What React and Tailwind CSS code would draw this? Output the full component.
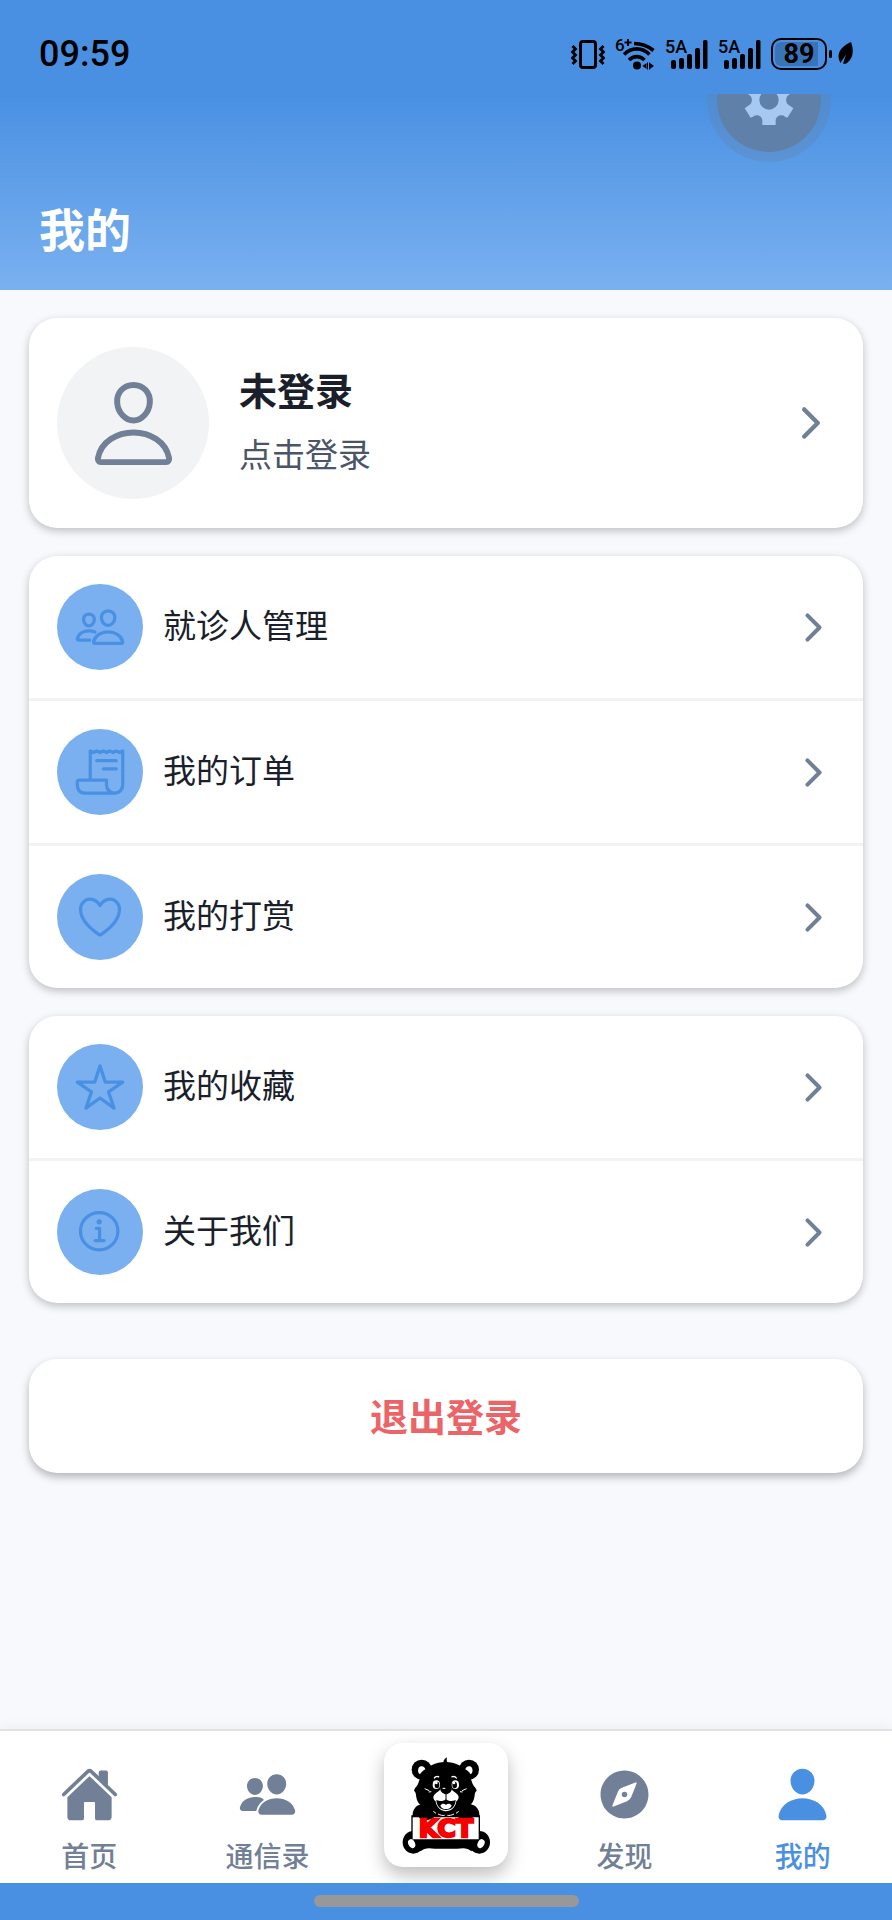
import React, { useState } from 'react';
import {
  IoChevronForward,
  IoCompass,
  IoHeartOutline,
  IoHome,
  IoInformationCircleOutline,
  IoPeople,
  IoPeopleOutline,
  IoPerson,
  IoPersonOutline,
  IoReceiptOutline,
  IoStarOutline,
} from 'react-icons/io5';

const serviceItems = [
  { id: 'patients', label: '就诊人管理', icon: IoPeopleOutline },
  { id: 'orders', label: '我的订单', icon: IoReceiptOutline },
  { id: 'rewards', label: '我的打赏', icon: IoHeartOutline },
];

const otherItems = [
  { id: 'favorites', label: '我的收藏', icon: IoStarOutline },
  { id: 'about', label: '关于我们', icon: IoInformationCircleOutline },
];

// --- STATUS BAR ---
const VibrateIcon = () => (
  <svg width="34" height="29" viewBox="0 0 34 29" fill="none" stroke="#000" aria-hidden="true">
    <rect x="9.5" y="1.5" width="15" height="26" rx="2.5" strokeWidth="3" />
    <path d="M1.5 6l3 3-3 3 3 3-3 3 3 3-3 3" strokeWidth="2.8" />
    <path d="M32.5 6l-3 3 3 3-3 3 3 3-3 3 3 3" strokeWidth="2.8" />
  </svg>
);

const WifiIcon = () => (
  <svg width="40" height="41" viewBox="0 -5 40 41" fill="none" stroke="#000" strokeWidth="3.6" aria-hidden="true">
    <path d="M19 4.5c8 0 14 2.5 19.5 7" />
    <path d="M9 15.5c7.5-7.5 18-7.5 25.5 0" />
    <path d="M14 21c4.5-4.5 11-4.5 15.5 0" />
    <circle cx="22" cy="26.5" r="4" fill="#000" stroke="none" />
    <path d="M27.5 27l4-3v6zM39 27l-4-3v6z" fill="#000" stroke="none" />
    <path d="M32.5 23.5v7M34.5 23.5v7" strokeWidth="1" />
    <text x="0" y="12" fill="#000" stroke="none" className="font-['Roboto',sans-serif] text-[17px] font-medium">6</text>
    <path d="M9.5 3.5h7M13 0v7" strokeWidth="2" />
  </svg>
);

const SignalIcon = () => (
  <svg width="43" height="41" viewBox="0 -6 43 41" aria-hidden="true">
    <text x="0" y="13" className="font-['Roboto',sans-serif] text-[18px] font-medium">5A</text>
    <rect x="6" y="20" width="5" height="9" rx="2" />
    <rect x="14" y="18" width="5" height="11" rx="2" />
    <rect x="22" y="14" width="5" height="15" rx="2" />
    <rect x="30" y="8" width="5" height="21" rx="2" />
    <rect x="38" y="0" width="4.5" height="29" rx="1.5" />
  </svg>
);

const LeafIcon = () => (
  <svg width="15" height="24" viewBox="0 0 15 24" aria-hidden="true">
    <path d="M13 0c3 8 2.5 16-4 21-1.5 1-3 1-4 .5l3-9-5.5 8.5C-1.5 14 0 6 13 0z" />
  </svg>
);

const Battery = ({ level }) => (
  <div className="flex items-center gap-0.5">
    <div className="w-14 h-8 rounded-[10px] border-2 border-black p-0.5">
      <div className="relative h-full flex items-center justify-center">
        <div className="absolute inset-y-0 left-0 rounded-l-md bg-[#3a74b8]" style={{ width: `${level}%` }}></div>
        <span className="relative text-[27px] leading-8 font-bold">{level}</span>
      </div>
    </div>
    <div className="w-[3px] h-2 rounded-full bg-black"></div>
  </div>
);

const StatusBar = () => (
  <div className="h-[94px] px-[39px] pt-[14px] flex items-center justify-between bg-[#4990e2] text-black font-['Roboto',sans-serif]">
    <span className="text-[36px] leading-none font-medium">09:59</span>
    <div className="flex items-center gap-[10px]">
      <VibrateIcon />
      <WifiIcon />
      <SignalIcon />
      <SignalIcon />
      <div className="flex items-center gap-1.5">
        <Battery level={89} />
        <LeafIcon />
      </div>
    </div>
  </div>
);

// --- HEADER ---
const GearIcon = () => (
  <svg width="50" height="50" viewBox="-75 -75 150 150" fill="#a6c9f4" aria-hidden="true">
    <path
      fillRule="evenodd"
      d="M-20-75H20V-60C22-46 38-42 48-52L55-53 73-25 55-12C50-5 50 5 55 12L73 25 55 53 48 50C38 42 22 46 20 60V75H-20V60C-22 46-38 42-48 50L-55 53-73 25-55 12C-50 5-50-5-55-12L-73-25-55-53-48-52C-38-42-22-46-20-60zM0-29A29 29 0 1 0 0 29 29 29 0 1 0 0-29z"
    />
  </svg>
);

const Header = () => (
  <header className="h-[196px] overflow-hidden flex flex-col justify-between bg-linear-to-b from-[#4990e2] to-[#7ab1f0]">
    <button
      type="button"
      aria-label="设置"
      className="size-[124px] -mt-14 mr-[61px] self-end rounded-full border-10 border-[#5f80a8]/30 bg-[#5e80a9] bg-clip-padding flex items-center justify-center"
    >
      <GearIcon />
    </button>
    <h1 className="px-[39px] pb-7 text-[46px] leading-[70px] font-bold text-white">我的</h1>
  </header>
);

// --- MENU ---
const MenuRow = ({ item }) => {
  const Icon = item.icon;
  return (
    <li>
      <button type="button" className="w-full p-7 flex items-center gap-5 text-left">
        <span className="size-[86px] shrink-0 rounded-full bg-[#7ab0f0] text-[#4a90e2] flex items-center justify-center">
          <Icon size={52} />
        </span>
        <span className="flex-1 pb-1.5 text-[33px] leading-[48px] text-[#1a1f2b]">{item.label}</span>
        <IoChevronForward size={43} className="shrink-0 text-[#718096]" />
      </button>
    </li>
  );
};

const MenuCard = ({ items }) => (
  <ul className="rounded-[28px] bg-white shadow-[0_3px_8px_rgba(0,0,0,0.24)] divide-y-3 divide-[#f2f3f5]">
    {items.map(item => (
      <MenuRow key={item.id} item={item} />
    ))}
  </ul>
);

// --- BOTTOM NAV ---
const BearLogo = () => (
  <svg width="100" height="106" viewBox="0 0 300 318" aria-hidden="true">
    <g fill="#000">
      {/* ears and head */}
      <circle cx="77" cy="53" r="30" />
      <circle cx="219" cy="53" r="30" />
      <path d="M144 36c-4-6-1-14 9-20-2 8-1 14 4 18z" />
      <path d="M148 30c30 0 54 12 68 34 8 12 10 22 14 32 4 8 12 14 12 20-4 4-6 8-6 14-2 18-8 26-20 34-18 14-40 24-68 24s-50-10-68-24c-12-8-18-16-20-34 0-6-2-10-6-14 0-6 8-12 12-20 4-10 6-20 14-32 14-22 38-34 68-34z" />
      {/* arms, body and feet */}
      <path d="M78 156c-20 4-30 18-28 40h200c2-22-8-36-28-40z" />
      <path d="M46 256h208l-28 42c-10-12-28-10-42-8h-68c-14-2-32-4-42 8z" />
      <ellipse cx="52" cy="271" rx="32" ry="34" />
      <ellipse cx="250" cy="271" rx="32" ry="34" />
      <path d="M46 190h206v76H46z" />
    </g>
    <g fill="#fff">
      <path d="M72 67c-9-5-7-22 2-24 8-2 13 4 14 9-7 4-12 9-16 15z" />
      <path d="M224 67c9-5 7-22-2-24-8-2-13 4-14 9 7 4 12 9 16 15z" />
      <path d="M113 78c3-7 13-8 17-5l-1 4c-5-2-11-1-14 4zM183 78c-3-7-13-8-17-5l1 4c5-2 11-1 14 4z" />
      {/* eyes */}
      <ellipse cx="121" cy="98" rx="11" ry="13" />
      <ellipse cx="178" cy="98" rx="11" ry="13" />
      {/* muzzle */}
      <path d="M134 110c4-6 28-6 32 0 4 8 12 10 19 18 6 8 2 14-4 20-2 18-16 30-31 30s-29-12-31-30c-6-6-10-12-4-20 7-8 15-10 19-18z" />
      <path d="M50 196h198v66H50z" />
      <ellipse cx="47" cy="275" rx="10" ry="14" transform="rotate(-25 47 275)" />
      <ellipse cx="255" cy="275" rx="10" ry="14" transform="rotate(25 255 275)" />
    </g>
    <g fill="#000">
      <ellipse cx="123" cy="99" rx="7" ry="10" />
      <ellipse cx="176" cy="99" rx="7" ry="10" />
      <path d="M133 112c0-10 34-10 34 0 0 8-10 15-17 15s-17-7-17-15z" />
      <path d="M121 144c11 5 22 4 29-3 7 7 18 8 29 3-1 20-13 30-29 30s-28-10-29-30z" />
      {/* paws over the board */}
      <path d="M68 194c6 13 32 14 46 2l4-10H68zM232 194c-6 13-32 14-46 2l-4-10h50z" />
    </g>
    <path d="M150 125v18" stroke="#000" strokeWidth="3" />
    <g fill="#fff">
      <circle cx="121" cy="93" r="4" />
      <circle cx="174" cy="93" r="4" />
      <path d="M133 161c5-7 12-7 17-2 5-5 12-5 17 2-4 8-10 10-17 10s-13-2-17-10z" />
      <ellipse cx="144" cy="109" rx="5" ry="2" />
    </g>
    <g fill="none" stroke="#fff" strokeWidth="3">
      <path d="M86 110l14 6M98 120l8-1M212 110l-14 6M200 120l-8-1M112 178l8 6M188 178l-8 6M126 186c8 4 14 5 20 4M174 186c-8 4-14 5-20 4" />
    </g>
    <text
      x="150"
      y="254"
      textAnchor="middle"
      fill="#f60000"
      stroke="#f60000"
      strokeWidth="7"
      className="font-['DejaVu_Sans',sans-serif] text-[76px] font-bold"
    >
      KCT
    </text>
  </svg>
);

const NavTab = ({ label, icon: Icon, active, onClick }) => (
  <button
    type="button"
    onClick={onClick}
    aria-current={active ? 'page' : undefined}
    className={`flex-1 flex flex-col items-center pt-[34px] gap-[11px] ${active ? 'text-[#4a90e2]' : 'text-[#718096]'}`}
  >
    <Icon size={59} />
    <span className="text-[28px] leading-[40px] font-medium">{label}</span>
  </button>
);

const BottomNav = () => {
  const [tab, setTab] = useState('mine');

  return (
    <nav className="h-[154px] flex items-start border-t-2 border-[#e2e2e4] bg-white shadow-[0_-2px_12px_rgba(0,0,0,0.05)]">
      <NavTab label="首页" icon={IoHome} active={tab === 'home'} onClick={() => setTab('home')} />
      <NavTab label="通信录" icon={IoPeople} active={tab === 'contacts'} onClick={() => setTab('contacts')} />
      <div className="flex-1 flex justify-center pt-3">
        <button
          type="button"
          aria-label="KCT"
          className="size-[124px] rounded-[19px] bg-white shadow-[0_8px_18px_rgba(0,0,0,0.26)] flex items-center justify-center"
        >
          <BearLogo />
        </button>
      </div>
      <NavTab label="发现" icon={IoCompass} active={tab === 'discover'} onClick={() => setTab('discover')} />
      <NavTab label="我的" icon={IoPerson} active={tab === 'mine'} onClick={() => setTab('mine')} />
    </nav>
  );
};

const App = () => {
  return (
    <div className="min-h-screen flex flex-col bg-[#f7f9fd] font-['Noto_Sans_CJK_SC',sans-serif]">
      <StatusBar />
      <Header />

      <main className="flex-1 px-[29px] py-7 flex flex-col gap-7">
        {/* Profile */}
        <button
          type="button"
          className="px-7 py-[29px] flex items-center gap-[30px] rounded-[28px] bg-white text-left shadow-[0_3px_8px_rgba(0,0,0,0.24)]"
        >
          <span className="size-[152px] shrink-0 rounded-full bg-[#f2f3f5] text-[#718096] flex items-center justify-center">
            <IoPersonOutline size={95} />
          </span>
          <span className="flex-1 pb-2 flex flex-col gap-3">
            <span className="text-[38px] leading-[56px] font-bold text-[#1a1f2b]">未登录</span>
            <span className="text-[33px] leading-[48px] text-[#4a5568]">点击登录</span>
          </span>
          <IoChevronForward size={48} className="shrink-0 text-[#718096]" />
        </button>

        <MenuCard items={serviceItems} />
        <MenuCard items={otherItems} />

        <button
          type="button"
          className="mt-7 pt-7 pb-[30px] rounded-[28px] bg-white text-[38px] leading-[56px] font-bold text-[#ea6468] shadow-[0_4px_9px_rgba(0,0,0,0.28)]"
        >
          退出登录
        </button>
      </main>

      <BottomNav />
      <div className="h-[37px] pb-0.5 flex items-center justify-center bg-[#4990e2]">
        <div className="w-[265px] h-3 rounded-full bg-[#989898]"></div>
      </div>
    </div>
  );
};

export default App;
